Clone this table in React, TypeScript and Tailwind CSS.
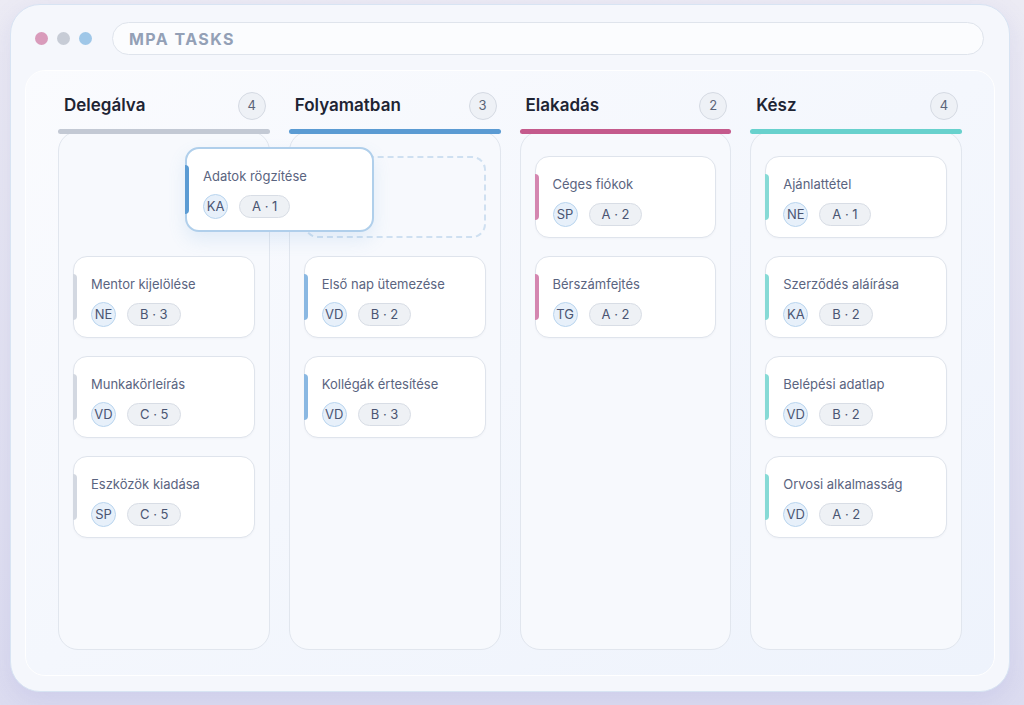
import React from "react";

type Task = { title: string; who: string; tag: string };

type Column = {
  name: string;
  count: number;
  bar: string;
  accent: string;
  gap?: "empty" | "dashed";
  tasks: Task[];
};

const COLUMNS: Column[] = [
  {
    name: "Delegálva",
    count: 4,
    bar: "bg-[#c3c9d4]",
    accent: "bg-[#d3d8e1]",
    gap: "empty",
    tasks: [
      { title: "Mentor kijelölése", who: "NE", tag: "B · 3" },
      { title: "Munkakörleírás", who: "VD", tag: "C · 5" },
      { title: "Eszközök kiadása", who: "SP", tag: "C · 5" },
    ],
  },
  {
    name: "Folyamatban",
    count: 3,
    bar: "bg-[#5b9bd3]",
    accent: "bg-[#8ab8e2]",
    gap: "dashed",
    tasks: [
      { title: "Első nap ütemezése", who: "VD", tag: "B · 2" },
      { title: "Kollégák értesítése", who: "VD", tag: "B · 3" },
    ],
  },
  {
    name: "Elakadás",
    count: 2,
    bar: "bg-[#c45a8c]",
    accent: "bg-[#d486b0]",
    tasks: [
      { title: "Céges fiókok", who: "SP", tag: "A · 2" },
      { title: "Bérszámfejtés", who: "TG", tag: "A · 2" },
    ],
  },
  {
    name: "Kész",
    count: 4,
    bar: "bg-[#68d1cd]",
    accent: "bg-[#86dad6]",
    tasks: [
      { title: "Ajánlattétel", who: "NE", tag: "A · 1" },
      { title: "Szerződés aláírása", who: "KA", tag: "B · 2" },
      { title: "Belépési adatlap", who: "VD", tag: "B · 2" },
      { title: "Orvosi alkalmasság", who: "VD", tag: "A · 2" },
    ],
  },
];

function Meta({ who, tag }: { who: string; tag: string }) {
  return (
    <div className="flex items-center gap-[11px]">
      <span className="w-[25px] h-[25px] rounded-full bg-[#e7f0fa] border border-[#b9d5ef] flex items-center justify-center text-[13px] text-[#4a5572]">
        {who}
      </span>
      <span className="h-[23px] px-[12px] rounded-full bg-[#eef1f5] border border-[#d8dde5] flex items-center text-[13px] text-[#4a5572]">
        {tag}
      </span>
    </div>
  );
}

function Card({ task, accent }: { task: Task; accent: string }) {
  return (
    <div className="h-[82px] flex bg-white border border-[#dfe4ec] rounded-[14px] shadow-[0_1px_2px_rgba(30,41,59,0.03)]">
      <div className={`w-[4px] my-[17px] -ml-px rounded-r-full ${accent}`} />
      <div className="pl-[14px] pt-[17px] flex flex-col gap-[8px]">
        <p className="text-[13px] leading-[20px] text-[#5a6480]">{task.title}</p>
        <Meta who={task.who} tag={task.tag} />
      </div>
    </div>
  );
}

export default function App() {
  return (
    <div
      className="w-[1024px] h-[705px] overflow-hidden bg-gradient-to-b from-[#ecebf4] to-[#dcdcf0] pt-[4px] pl-[10px]"
      style={{ fontFamily: "Inter, 'Noto Sans', sans-serif" }}
    >
      <div className="w-[1000px] h-[688px] rounded-[30px] bg-[#f5f7fc] border border-[#d8e4f3] shadow-[0_8px_24px_rgba(120,120,200,0.15)] flex flex-col">
        {/* title bar */}
        <div className="flex items-center pt-[17px] pl-[24px] pr-[25px]">
          <div className="flex gap-[9px]">
            <span className="w-[13px] h-[13px] rounded-full bg-[#d99bbb]" />
            <span className="w-[13px] h-[13px] rounded-full bg-[#c7ccd6]" />
            <span className="w-[13px] h-[13px] rounded-full bg-[#9fc7e8]" />
          </div>
          <div className="ml-[20px] flex-1 h-[33px] rounded-full bg-[#fbfcfe] border border-[#dfe4ec] flex items-center pl-[16px]">
            <span className="text-[16px] font-bold tracking-[0.09em] text-[#93a0b6]">MPA TASKS</span>
          </div>
        </div>

        {/* board */}
        <div className="relative mt-[15px] mx-[14px] mb-[15px] flex-1 rounded-[20px] bg-gradient-to-br from-[#fafbfe] to-[#eef3fc] border border-white px-[32px] pb-[25px] flex gap-[19px]">
          {COLUMNS.map((col) => (
            <div key={col.name} className="w-[212px] flex flex-col">
              <div className="flex items-center justify-between h-[32px] mt-[19px] pl-[6px] pr-[4px]">
                <h2 className="text-[17px] font-semibold text-[#1e2433]">{col.name}</h2>
                <span className="w-[28px] h-[28px] rounded-full bg-[#eef1f6] border border-[#d5dae3] flex items-center justify-center text-[13px] text-[#5b6478]">
                  {col.count}
                </span>
              </div>
              <div className={`mt-[7px] h-[5px] rounded-full relative z-10 ${col.bar}`} />
              <div className="-mt-[3px] flex-1 rounded-[20px] border border-[#e1e6ee] bg-[#f7f9fd] px-[14px] pt-[24px] flex flex-col gap-[18px]">
                {col.gap === "empty" && <div className="h-[82px]" />}
                {col.gap === "dashed" && (
                  <div className="h-[82px] rounded-[14px] border-2 border-dashed border-[#cfe0f1]" />
                )}
                {col.tasks.map((t) => (
                  <Card key={t.title} task={t} accent={col.accent} />
                ))}
              </div>
            </div>
          ))}

          {/* dragged card */}
          <div className="absolute left-[159px] top-[76px] w-[189px] h-[85px] flex bg-white border-2 border-[#b0cfeb] rounded-[14px] shadow-[0_8px_18px_rgba(91,155,211,0.14)] z-20">
            <div className="w-[4px] my-[16px] -ml-[2px] rounded-r-full bg-[#5b9bd3]" />
            <div className="pl-[14px] pt-[17px] flex flex-col gap-[8px]">
              <p className="text-[13px] leading-[20px] text-[#5a6480]">Adatok rögzítése</p>
              <Meta who="KA" tag="A · 1" />
            </div>
          </div>
        </div>
      </div>
    </div>
  );
}
